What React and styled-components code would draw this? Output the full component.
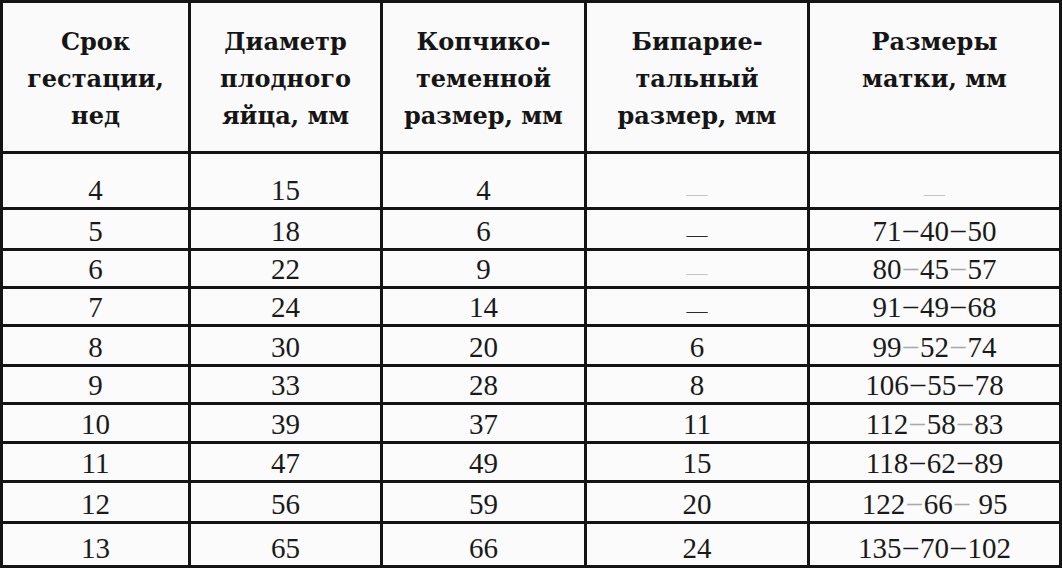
import styled, { createGlobalStyle } from "styled-components";

const GlobalStyle = createGlobalStyle`
  html, body {
    margin: 0;
    padding: 0;
    background: #fff;
  }
`;

const Grid = styled.div`
  display: grid;
  grid-template-columns: 185px 189px 201px 220px 249px;
  grid-template-rows: 148px 53px 38px 35px 35px 37px 35px 36px 36px 38px 41px;
  gap: 3px;
  padding: 3px;
  width: 1062px;
  box-sizing: border-box;
  background: #141414;
`;

const HeadCell = styled.div`
  background: #fafafa;
  padding-top: 20px;
  text-align: center;
  font-family: "DejaVu Serif", "Liberation Serif", serif;
  font-weight: bold;
  font-size: 24px;
  line-height: 37px;
  color: #151515;
`;

const Cell = styled.div`
  background: #fbfbfb;
  display: flex;
  align-items: flex-end;
  justify-content: center;
  padding-bottom: 2px;
  font-family: "Liberation Serif", serif;
  font-size: 29px;
  line-height: 1;
  color: #1a1a1a;
`;

const Dash = styled.span`
  font-size: 21px;
  vertical-align: 5px;
  color: ${(p) => (p.$faded ? "#c4c4c4" : "#2a2a2a")};
`;

const Sep = styled.span`
  padding: 0 2px;
  vertical-align: 2px;
  color: ${(p) => (p.$faded ? "#a8a8a8" : "inherit")};
`;

const heads = [
  ["Срок", "гестации,", "нед"],
  ["Диаметр", "плодного", "яйца, мм"],
  ["Копчико-", "теменной", "размер, мм"],
  ["Бипарие-", "тальный", "размер, мм"],
  ["Размеры", "матки, мм"],
];

// last field: uterus size parts, then whether the dashes came out faint in the scan
const rows = [
  ["4", "15", "4", "~", null],
  ["5", "18", "6", "—", ["71", "40", "50"]],
  ["6", "22", "9", "~", ["80", "45", "57"], true],
  ["7", "24", "14", "—", ["91", "49", "68"]],
  ["8", "30", "20", "6", ["99", "52", "74"], true],
  ["9", "33", "28", "8", ["106", "55", "78"]],
  ["10", "39", "37", "11", ["112", "58", "83"], true],
  ["11", "47", "49", "15", ["118", "62", "89"]],
  ["12", "56", "59", "20", ["122", "66", " 95"], true],
  ["13", "65", "66", "24", ["135", "70", "102"]],
];

const Biparietal = ({ value }) => {
  if (value === "~") return <Dash $faded>—</Dash>;
  if (value === "—") return <Dash>—</Dash>;
  return value;
};

const Uterus = ({ parts, faded }) => {
  if (!parts) return <Dash $faded>—</Dash>;
  return (
    <span>
      {parts[0]}
      <Sep $faded={faded}>–</Sep>
      {parts[1]}
      <Sep $faded={faded}>–</Sep>
      {parts[2]}
    </span>
  );
};

const App = () => {
  return (
    <>
      <GlobalStyle />
      <Grid>
        {heads.map((lines, i) => (
          <HeadCell key={i}>
            {lines.map((l, j) => (
              <div key={j}>{l}</div>
            ))}
          </HeadCell>
        ))}
        {rows.map((r) => [
          <Cell key={r[0] + "a"}>{r[0]}</Cell>,
          <Cell key={r[0] + "b"}>{r[1]}</Cell>,
          <Cell key={r[0] + "c"}>{r[2]}</Cell>,
          <Cell key={r[0] + "d"}>
            <Biparietal value={r[3]} />
          </Cell>,
          <Cell key={r[0] + "e"}>
            <Uterus parts={r[4]} faded={r[5]} />
          </Cell>,
        ])}
      </Grid>
    </>
  );
};

export default App;
